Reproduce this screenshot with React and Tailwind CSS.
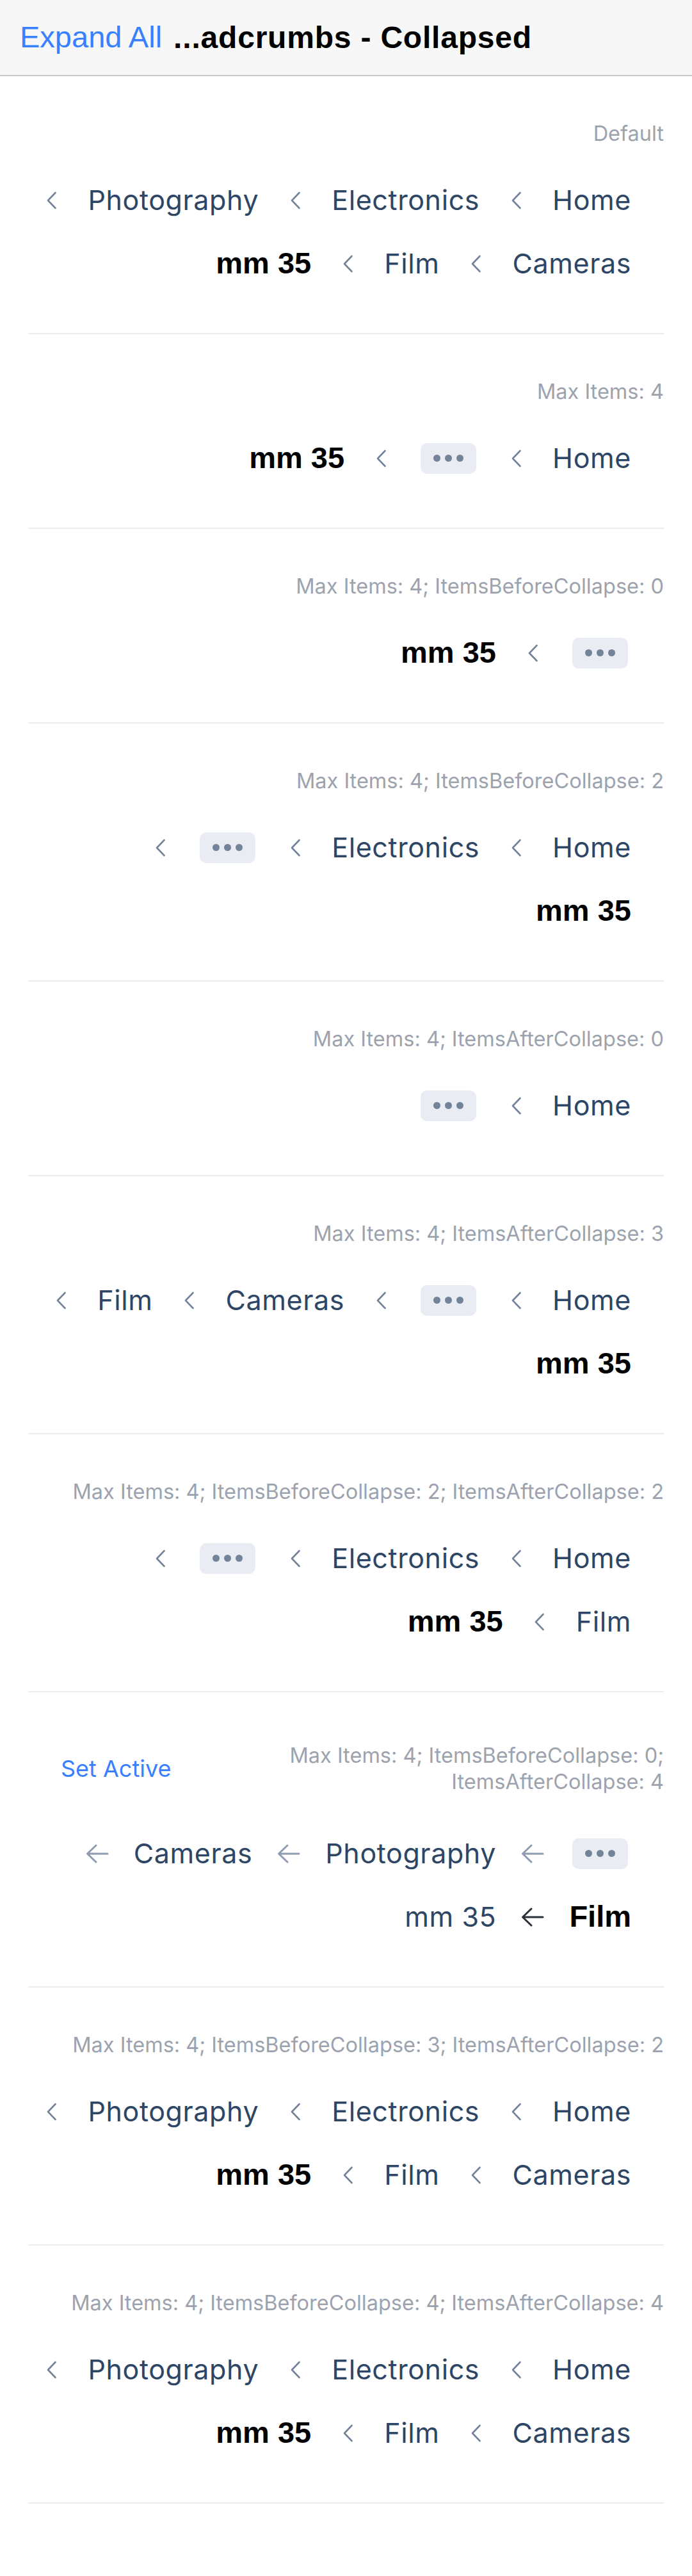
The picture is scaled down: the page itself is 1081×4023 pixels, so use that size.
import React from 'react'

const sections = [
  { label: 'Default', rows: [['Home', 'Electronics', 'Photography'], ['Cameras', 'Film', '*mm 35']] },
  { label: 'Max Items: 4', rows: [['Home', '…', '*mm 35']] },
  { label: 'Max Items: 4; ItemsBeforeCollapse: 0', rows: [['…', '*mm 35']] },
  { label: 'Max Items: 4; ItemsBeforeCollapse: 2', rows: [['Home', 'Electronics', '…'], ['*mm 35']] },
  { label: 'Max Items: 4; ItemsAfterCollapse: 0', rows: [['Home', '…']] },
  { label: 'Max Items: 4; ItemsAfterCollapse: 3', rows: [['Home', '…', 'Cameras', 'Film'], ['*mm 35']] },
  { label: 'Max Items: 4; ItemsBeforeCollapse: 2; ItemsAfterCollapse: 2', rows: [['Home', 'Electronics', '…'], ['Film', '*mm 35']] },
  { custom: true, rows: [['…', 'Photography', 'Cameras'], ['*Film', 'mm 35']] },
  { label: 'Max Items: 4; ItemsBeforeCollapse: 3; ItemsAfterCollapse: 2', rows: [['Home', 'Electronics', 'Photography'], ['Cameras', 'Film', '*mm 35']] },
  { label: 'Max Items: 4; ItemsBeforeCollapse: 4; ItemsAfterCollapse: 4', rows: [['Home', 'Electronics', 'Photography'], ['Cameras', 'Film', '*mm 35']] },
]

function Chevron () {
  return (
    <svg width="17" height="28" viewBox="0 0 17 28" fill="none">
      <path d="M14.5 2 L3 14 L14.5 26" stroke="#73849a" strokeWidth="2.6" strokeLinecap="round" strokeLinejoin="round" />
    </svg>
  )
}

function Arrow ({ dark }) {
  return (
    <svg width="38" height="32" viewBox="0 0 38 32" fill="none">
      <path d="M17 3 L3.5 16 L17 29 M5 16 H35" stroke={dark ? '#2a3038' : '#8e9cb0'} strokeWidth="3" strokeLinecap="round" strokeLinejoin="round" />
    </svg>
  )
}

function Ellipsis () {
  return (
    <span className="px-[19px]">
      <span className="mx-[5px] flex h-[48px] w-[87px] items-center justify-center gap-[7px] rounded-[10px] bg-[#e9edf3]">
        <span className="h-[11px] w-[11px] rounded-full bg-[#73849a]" />
        <span className="h-[11px] w-[11px] rounded-full bg-[#73849a]" />
        <span className="h-[11px] w-[11px] rounded-full bg-[#73849a]" />
      </span>
    </span>
  )
}

function Crumb ({ item, last, arrows }) {
  const active = item.startsWith('*')
  const text = active ? item.slice(1) : item
  return (
    <div className="flex items-center">
      {text === '…'
        ? <Ellipsis />
        : (
          <span
            dir="ltr"
            className={active
              ? "px-[19px] font-['Liberation_Sans',Arial,sans-serif] text-[47px] font-bold text-black"
              : 'px-[19px] text-[43px] tracking-[0.6px] text-[#2d4665]'}
          >
            {text}
          </span>
          )}
      {!last && (
        <span className="mx-[19px] flex w-[38px] justify-center">
          {arrows ? <Arrow dark={active} /> : <Chevron />}
        </span>
      )}
    </div>
  )
}

function Section ({ section }) {
  const lastRow = section.rows.length - 1
  return (
    <div>
      <div className="pt-[70px] pb-[59px]">
        {section.custom
          ? (
            <div className="flex h-[98px] items-center justify-between">
              <button type="button" className="ml-[51px] text-[36px] text-[#3880ff]">Set Active</button>
              <div className="text-right text-[32.5px] leading-[41px] text-[#9ca3ae]">
                Max Items: 4; ItemsBeforeCollapse: 0;<br />ItemsAfterCollapse: 4
              </div>
            </div>
            )
          : <div className="text-right text-[32.5px] leading-[40px] text-[#9ca3ae]">{section.label}</div>}
        <div className="mt-[34px]">
          {section.rows.map((row, r) => (
            <div key={r} dir="rtl" className="flex h-[99px] items-center pr-[32px]">
              {row.map((item, i) => (
                <Crumb key={i} item={item} arrows={section.custom} last={r === lastRow && i === row.length - 1} />
              ))}
            </div>
          ))}
        </div>
      </div>
      <div className="h-[2px] bg-[#ebedf0]" />
    </div>
  )
}

export default function App () {
  return (
    <div className="min-h-screen bg-white font-[Inter,sans-serif]">
      <header className="flex h-[119px] items-center border-b-2 border-[#c8c8c8] bg-[#f7f7f7] pl-[31px] font-['Liberation_Sans',Arial,sans-serif]">
        <span className="text-[47px] text-[#3880ff]">Expand All</span>
        <span className="ml-[18px] text-[48px] font-bold tracking-[0.8px] text-black">...adcrumbs - Collapsed</span>
      </header>
      <div className="px-[44px]">
        {sections.map((s, i) => <Section key={i} section={s} />)}
      </div>
    </div>
  )
}
